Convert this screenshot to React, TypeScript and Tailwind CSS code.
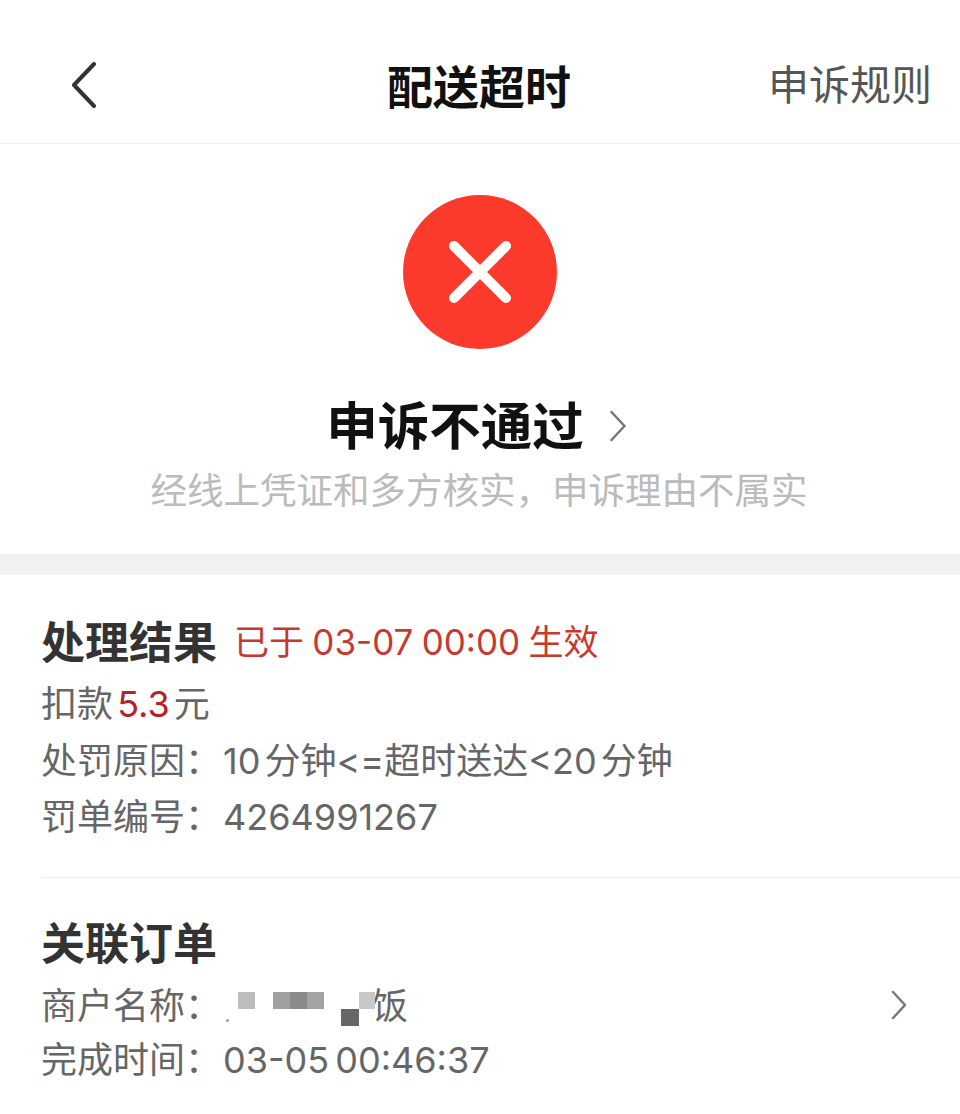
const cjk = "font-['Inter','Noto_Sans_CJK_SC',sans-serif]";

export default function App() {
  return (
    <div className={`w-[960px] h-[1114px] overflow-hidden bg-white ${cjk}`}>
      <header className="h-[144px] border-b border-[#eeeeee] flex items-center pl-[71px] pt-[26px]">
        <svg className="w-[26px] h-[46px] text-[#333333] shrink-0" viewBox="0 0 26 46" fill="none" stroke="currentColor" strokeWidth="4" strokeLinecap="round" strokeLinejoin="round">
          <path d="M23 2 L3 23 L23 44" />
        </svg>
        <h1 className="ml-[290px] mt-[4px] text-[46px] leading-[56px] font-bold text-[#111111] shrink-0">配送超时</h1>
        <span className="ml-[197px] text-[41px] leading-[56px] text-[#555555] shrink-0">申诉规则</span>
      </header>

      <section className="h-[410px] flex flex-col items-center pt-[51px]">
        <div className="w-[154px] h-[154px] rounded-full bg-[#fb3a2b] flex items-center justify-center">
          <svg className="w-[62px] h-[62px]" viewBox="0 0 62 62" fill="none" stroke="#ffffff" strokeWidth="10" strokeLinecap="round">
            <path d="M5 5 L57 57 M57 5 L5 57" />
          </svg>
        </div>
        <div className="mt-[43px] flex items-center gap-[26px] h-[68px] pr-[8px]">
          <span className="text-[51.5px] leading-[68px] font-bold text-[#111111]">申诉不通过</span>
          <svg className="w-[16px] h-[34px] text-[#777777]" viewBox="0 0 16 34" fill="none" stroke="currentColor" strokeWidth="2.5" strokeLinecap="round" strokeLinejoin="round">
            <path d="M1.5 3 L14.5 17 L1.5 31" />
          </svg>
        </div>
        <p className="mt-[6px] -ml-[2px] text-[36.5px] leading-[50px] text-[#bbbbbb] whitespace-nowrap">经线上凭证和多方核实，申诉理由不属实</p>
      </section>

      <div className="h-[21px] bg-[#f2f2f2]" />

      <section className="pl-[41px] pt-[38px]">
        <div className="flex items-center gap-[17px] h-[60px]">
          <h2 className="text-[44px] leading-[60px] font-bold text-[#333333]">处理结果</h2>
          <span className="text-[35px] leading-[50px] text-[#c9382f] -mt-[2px] [word-spacing:-1.5px]">已于 03-07 00:00 生效</span>
        </div>
        <div className="mt-[3px] text-[36px] leading-[56.5px] text-[#666666] [word-spacing:-6px]">
          <p>扣款 <span className="text-[#b5232a]">5.3</span> 元</p>
          <p><span className="mr-[2px]">处罚原因：</span>10 分钟&lt;=超时送达&lt;20 分钟</p>
          <p><span className="mr-[2px]">罚单编号：</span>4264991267</p>
        </div>
        <div className="mt-[31px] ml-[1px] h-px bg-[#eeeeee]" />
        <h2 className="mt-[36px] text-[44px] leading-[60px] font-bold text-[#333333]">关联订单</h2>
        <div className="mt-[5px] text-[36px] text-[#666666]">
          <div className="flex items-center h-[55px] pr-[53px]">
            <span>商户名称：</span>
            <span className="relative w-[151px] h-[55px] shrink-0">
              <span className="absolute left-[5px] top-[40px] w-[3px] h-[3px] rounded-full bg-[#999999]" />
              <span className="absolute left-[17px] top-[13px] w-[17px] h-[17px] bg-[#bdbdbd]" />
              <span className="absolute left-[52px] top-[13px] w-[17px] h-[17px] bg-[#a0a0a0]" />
              <span className="absolute left-[69px] top-[13px] w-[17px] h-[17px] bg-[#8a8a8a]" />
              <span className="absolute left-[86px] top-[13px] w-[17px] h-[17px] bg-[#a3a3a3]" />
              <span className="absolute left-[120px] top-[30px] w-[18px] h-[17px] bg-[#666666]" />
              <span className="absolute left-[138px] top-[13px] w-[16px] h-[17px] bg-[#c8c8c8]" />
            </span>
            <span>饭</span>
            <svg className="ml-auto -translate-y-[1px] w-[16px] h-[30px] text-[#777777]" viewBox="0 0 16 30" fill="none" stroke="currentColor" strokeWidth="2.5" strokeLinecap="round" strokeLinejoin="round">
              <path d="M2 2 L14 15 L2 28" />
            </svg>
          </div>
          <p className="leading-[52px] [word-spacing:-4px]"><span className="mr-[2px]">完成时间：</span>03-05 00:46:37</p>
        </div>
      </section>
    </div>
  );
}
